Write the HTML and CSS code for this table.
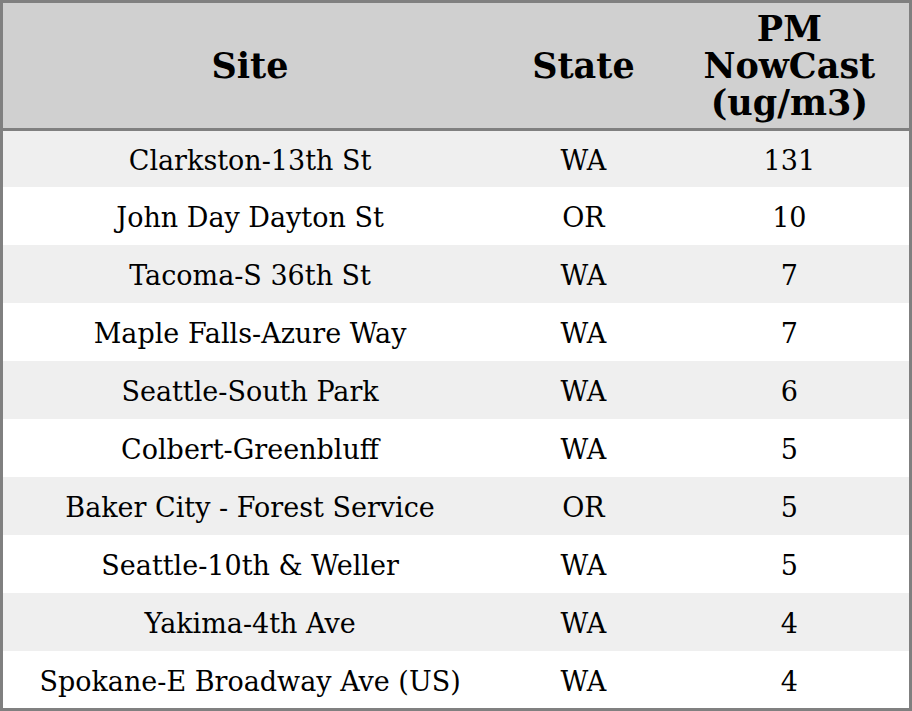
FILE: index.html
```html
<!DOCTYPE html>
<html>
<head>
<meta charset="utf-8">
<link rel="stylesheet" href="styles.css">
</head>
<body>
<table class="aq-table">
  <colgroup>
    <col class="col-site">
    <col class="col-state">
    <col class="col-pm">
  </colgroup>
  <thead>
    <tr>
      <th>Site</th>
      <th>State</th>
      <th>PM<br>NowCast<br>(ug/m3)</th>
    </tr>
  </thead>
  <tbody>
    <tr><td>Clarkston-13th St</td><td>WA</td><td>131</td></tr>
    <tr><td>John Day Dayton St</td><td>OR</td><td>10</td></tr>
    <tr><td>Tacoma-S 36th St</td><td>WA</td><td>7</td></tr>
    <tr><td>Maple Falls-Azure Way</td><td>WA</td><td>7</td></tr>
    <tr><td>Seattle-South Park</td><td>WA</td><td>6</td></tr>
    <tr><td>Colbert-Greenbluff</td><td>WA</td><td>5</td></tr>
    <tr><td>Baker City - Forest Service</td><td>OR</td><td>5</td></tr>
    <tr><td>Seattle-10th &amp; Weller</td><td>WA</td><td>5</td></tr>
    <tr><td>Yakima-4th Ave</td><td>WA</td><td>4</td></tr>
    <tr><td>Spokane-E Broadway Ave (US)</td><td>WA</td><td>4</td></tr>
  </tbody>
</table>
</body>
</html>
```
FILE: styles.css
```css
html, body {
  margin: 0;
  padding: 0;
  background: #ffffff;
}
.aq-table {
  width: 912px;
  border-collapse: collapse;
  table-layout: fixed;
  border: 3px solid #808080;
  font-family: "DejaVu Serif", serif;
  color: #000;
}
.col-site { width: 494px; }
.col-state { width: 172px; }
.col-pm { width: 240px; }
.aq-table th {
  background: #d0d0d0;
  font-size: 35px;
  font-weight: bold;
  line-height: 37px;
  height: 125px;
  padding: 0;
  text-align: center;
  vertical-align: middle;
  border-bottom: 3px solid #808080;
}
.aq-table td {
  font-size: 27px;
  height: 55px;
  padding: 3px 0 0 0;
  text-align: center;
  vertical-align: middle;
}
.aq-table tbody tr:nth-child(odd) td {
  background: #efefef;
}
.aq-table tbody tr:first-child td {
  height: 53px;
}
.aq-table tbody tr:last-child td {
  height: 54px;
}
```
